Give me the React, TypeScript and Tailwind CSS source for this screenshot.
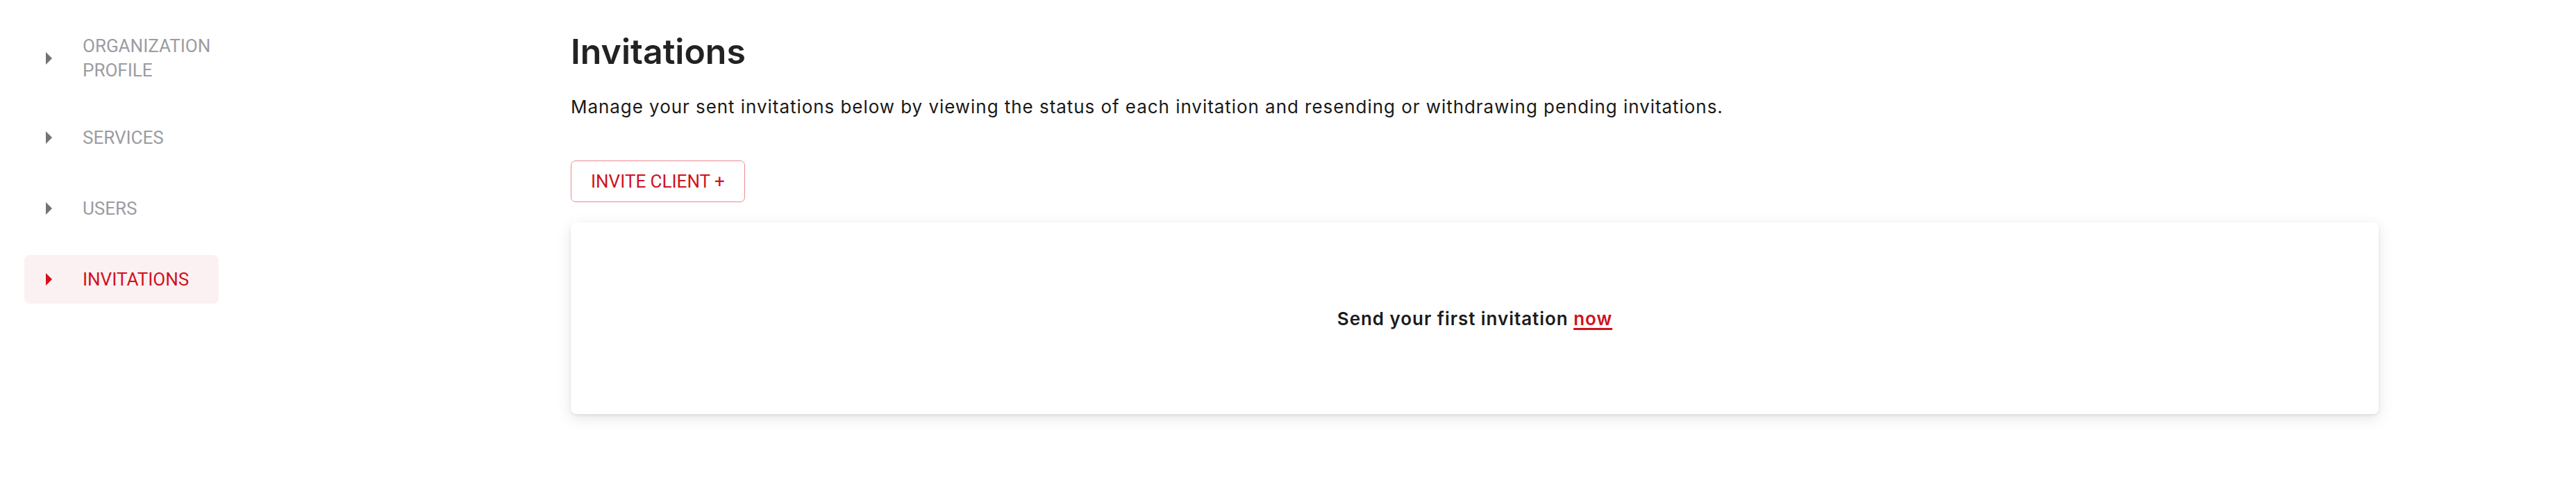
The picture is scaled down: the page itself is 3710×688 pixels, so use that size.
import React from 'react';

const navItems = [
  { label: 'ORGANIZATION PROFILE', tall: true },
  { label: 'SERVICES' },
  { label: 'USERS' },
  { label: 'INVITATIONS', active: true },
];

function Caret({ active }: { active?: boolean }) {
  return (
    <svg width="9" height="18" viewBox="0 0 9 18" className="flex-shrink-0">
      <polygon points="0,0 9,9 0,18" fill={active ? '#d0121d' : '#737373'} />
    </svg>
  );
}

export default function App() {
  return (
    <div className="flex w-[3710px] h-[688px] bg-white font-['Inter',sans-serif]">
      {/* Sidebar */}
      <aside className="w-[315px] pl-[35px] pt-[37px] flex-shrink-0">
        <nav className="flex flex-col gap-[32px] w-[280px]">
          {navItems.map((item) => (
            <div
              key={item.label}
              className={`flex items-center rounded-[8px] pl-[31px] pr-[8px] ${
                item.tall ? 'h-[94px]' : 'h-[70px]'
              } ${item.active ? 'bg-[#fcf1f2]' : ''}`}
            >
              <Caret active={item.active} />
              <span
                className={`ml-[44px] font-['Roboto',sans-serif] text-[26px] leading-[35px] ${
                  item.active ? 'text-[#d0121d]' : 'text-[#9b9ca2]'
                }`}
              >
                {item.label}
              </span>
            </div>
          ))}
        </nav>
      </aside>

      {/* Main content */}
      <main className="flex-1 pl-[507px] pt-[44px]">
        <h1 className="text-[50px] leading-[60px] font-semibold text-[#222222]">Invitations</h1>
        <p className="mt-[32px] text-[26px] leading-[36px] tracking-[0.95px] text-[#1a1a1a]">
          Manage your sent invitations below by viewing the status of each invitation and resending or withdrawing pending invitations.
        </p>

        <button className="mt-[59px] h-[60px] px-[28px] border border-[#ec8a90] rounded-[7px] font-['Roboto',sans-serif] text-[26px] text-[#d0121d] bg-white">
          INVITE CLIENT +
        </button>

        <div className="mt-[29px] w-[2604px] h-[276px] bg-white rounded-[8px] shadow-[0_2px_4px_rgba(0,0,0,0.08),0_6px_22px_rgba(0,0,0,0.1)] flex items-center justify-center">
          <p className="text-[26px] font-semibold tracking-[0.95px] text-[#1c1c1c]">
            Send your first invitation{' '}
            <a href="#" className="text-[#d0121d] underline decoration-[3px] underline-offset-[4px]">
              now
            </a>
          </p>
        </div>
      </main>
    </div>
  );
}
